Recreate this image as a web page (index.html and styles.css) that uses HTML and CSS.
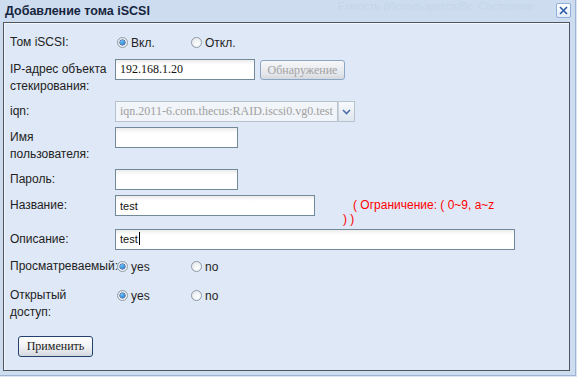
FILE: index.html
```html
<!DOCTYPE html>
<html lang="ru">
<head>
    <meta charset="UTF-8">
    <title>Добавление тома iSCSI</title>
    <link rel="stylesheet" href="styles.css">
</head>
<body>
    <div class="window">
        <div class="titlebar">
            <span class="title">Добавление тома iSCSI</span>
            <!-- header of the grid behind the window shows through -->
            <span class="ghost">Емкость (Используется/Вс&nbsp; Состояние</span>
            <span class="close">
                <svg width="9" height="9" viewBox="0 0 9 9">
                    <path d="M1 1 L8 8 M8 1 L1 8" stroke="#2a5caa" stroke-width="1.6" fill="none"/>
                </svg>
            </span>
        </div>

        <form class="panel">
            <div class="row">
                <div class="label">Том iSCSI:</div>
                <div class="radios">
                    <label class="opt"><span class="radio on"></span>Вкл.</label>
                    <label class="opt"><span class="radio"></span>Откл.</label>
                </div>
            </div>

            <div class="row gap-6">
                <div class="label">IP-адрес объекта стекирования:</div>
                <input class="field w-ip serif" type="text" value="192.168.1.20">
                <button type="button" class="btn btn-discover" disabled>Обнаружение</button>
            </div>

            <div class="row gap-6">
                <div class="label">iqn:</div>
                <div class="combo">
                    <input class="field combo-text serif" type="text" value="iqn.2011-6.com.thecus:RAID.iscsi0.vg0.test" disabled>
                    <span class="combo-trigger">
                        <svg width="9" height="6" viewBox="0 0 9 6">
                            <path d="M1 1 L4.5 4.5 L8 1" stroke="#4a6fa5" stroke-width="1.6" fill="none"/>
                        </svg>
                    </span>
                </div>
            </div>

            <div class="row gap-5">
                <div class="label">Имя пользователя:</div>
                <input class="field w-short" type="text">
            </div>

            <div class="row gap-6">
                <div class="label">Пароль:</div>
                <input class="field w-short" type="password">
            </div>

            <div class="row gap-5">
                <div class="label">Название:</div>
                <input class="field w-name" type="text" value="test">
                <div class="hint">( Ограничение: ( 0~9, a~z ) )</div>
            </div>

            <div class="row gap-3">
                <div class="label">Описание:</div>
                <div class="field w-desc">test<span class="caret"></span></div>
            </div>

            <div class="row gap-6">
                <div class="label nowrap">Просматреваемый:</div>
                <div class="radios">
                    <label class="opt"><span class="radio on"></span>yes</label>
                    <label class="opt"><span class="radio"></span>no</label>
                </div>
            </div>

            <div class="row gap-8">
                <div class="label">Открытый доступ:</div>
                <div class="radios">
                    <label class="opt"><span class="radio on"></span>yes</label>
                    <label class="opt"><span class="radio"></span>no</label>
                </div>
            </div>

            <button type="button" class="btn btn-apply">Применить</button>
        </form>
    </div>
</body>
</html>
```

FILE: styles.css
```css
body {
    margin: 0;
    background: #dbe5f3;
    font-family: "Liberation Sans", Arial, sans-serif;
    font-size: 12px;
    color: #1f1f1f;
}

.window {
    width: 575px;
    height: 375px;
    background: #cddcef;
    border-right: 1px solid #9db4d3;
    border-bottom: 1px solid #9db4d3;
    overflow: hidden;
}

.titlebar {
    display: flex;
    align-items: center;
    height: 22px;
    padding: 0 4px 0 5px;
}

.title {
    font-weight: bold;
    font-size: 12.5px;
    color: #16253d;
}

/* faint header of the table behind */
.ghost {
    align-self: flex-start;
    margin: 1px 0 0 188px;
    font-size: 11px;
    line-height: 11px;
    color: #c6d6ea;
}

.close {
    display: flex;
    align-items: center;
    justify-content: center;
    width: 13px;
    height: 13px;
    margin: -2px 0 0 auto;
    border: 1px solid #8fb0da;
    border-radius: 2px;
    background: linear-gradient(#ffffff, #e3ecf8);
}

.panel {
    width: 559px;
    height: 338px;
    margin: 0 0 0 3px;
    padding: 9px 0 0 6px;
    border: 1px solid #4d5660;
    box-shadow: inset 1px 1px 0 #f4f8fd;
    background: #dfe8f6;
}

.row {
    display: flex;
    align-items: flex-start;
}

.gap-3 { margin-top: 3px; }
.gap-5 { margin-top: 5px; }
.gap-6 { margin-top: 6px; }
.gap-8 { margin-top: 8px; }

.label {
    width: 100px;
    flex-shrink: 0;
    padding: 2px 5px 0 0;
    line-height: 17px;
    color: #222;
}

.label.nowrap {
    white-space: nowrap;
}

.radios {
    display: flex;
    align-items: center;
    height: 21px;
    padding-left: 2px;
}

.opt {
    display: flex;
    align-items: center;
    width: 74px;
}

.radio {
    position: relative;
    width: 11px;
    height: 11px;
    margin-right: 3px;
    box-sizing: border-box;
    border: 1px solid #8d9aa6;
    border-radius: 50%;
    background: radial-gradient(circle at 60% 65%, #ffffff, #dfe3e8);
}

.radio.on::after {
    content: '';
    position: absolute;
    left: 2px;
    top: 2px;
    width: 5px;
    height: 5px;
    border-radius: 50%;
    background: radial-gradient(circle at 40% 35%, #6fc0ff, #0f5fb5);
    box-shadow: 0 0 0 0.5px #1b3f73;
}

.field {
    box-sizing: border-box;
    height: 21px;
    margin: 0;
    padding: 0 4px;
    border: 1px solid #72899a;
    background: linear-gradient(#ececec, #ffffff 5px);
    font-family: "Liberation Sans", Arial, sans-serif;
    font-size: 11px;
    line-height: 19px;
    color: #111;
    outline: none;
}

.serif {
    font-family: "Liberation Serif", "Times New Roman", serif;
    font-size: 12px;
}

.w-ip { width: 140px; }
.w-short { width: 123px; }
.w-name { width: 200px; }
.w-desc { width: 400px; }

.caret {
    display: inline-block;
    width: 1px;
    height: 13px;
    margin-left: 1px;
    vertical-align: -2px;
    background: #000;
}

.combo {
    display: flex;
}

.combo-text {
    width: 223px;
    border-color: #b6c3cd;
    background: #f1f4f8;
    color: #a0a0a0;
}

.combo-trigger {
    display: flex;
    align-items: center;
    justify-content: center;
    box-sizing: border-box;
    width: 17px;
    height: 21px;
    border: 1px solid #b6c3cd;
    border-left: 1px solid #c9d4dc;
    background: linear-gradient(#f7f9fc, #dfe6ef);
}

.btn {
    box-sizing: border-box;
    padding: 0;
    border-radius: 3px;
    font-family: "Liberation Serif", "Times New Roman", serif;
    font-size: 12px;
}

.btn-discover {
    width: 85px;
    height: 20px;
    margin: 1px 0 0 5px;
    border: 1px solid #8aa6c4;
    background: linear-gradient(#f6f7f9, #e4e7eb 70%, #d5d9de);
    color: #a3a3a3;
}

.hint {
    width: 158px;
    margin-left: 28px;
    padding-top: 3px;
    line-height: 14px;
    text-indent: 10px;
    color: #f00;
}

.btn-apply {
    width: 75px;
    height: 21px;
    margin: 15px 0 0 8px;
    border: 1px solid #23426d;
    background: linear-gradient(#ffffff, #eef0f3 55%, #d4d8de);
    color: #1a1a1a;
}
```
